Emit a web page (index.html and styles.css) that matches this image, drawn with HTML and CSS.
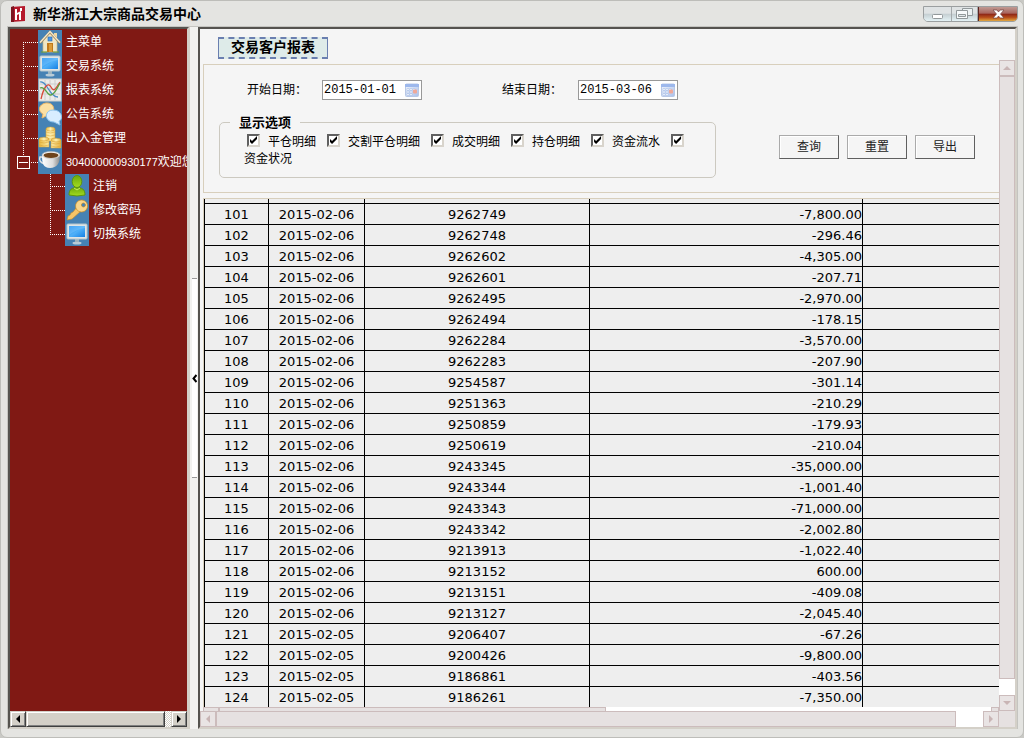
FILE: index.html
```
<!DOCTYPE html>
<html lang="zh-CN">
<head>
<meta charset="utf-8">
<title>新华浙江大宗商品交易中心</title>
<link rel="stylesheet" href="styles.css">
</head>
<body>
<svg class="defs" aria-hidden="true">
  <defs>
    <linearGradient id="screen" x1="0" y1="0" x2="1" y2="1"><stop offset="0" stop-color="#1c86e8"/><stop offset=".5" stop-color="#4fb0f8"/><stop offset="1" stop-color="#1580e4"/></linearGradient>
    <linearGradient id="gold" x1="0" x2="1"><stop offset="0" stop-color="#e8b840"/><stop offset=".5" stop-color="#fdf0b0"/><stop offset="1" stop-color="#e4b040"/></linearGradient>
    <linearGradient id="green" x1="0" y1="0" x2="0" y2="1"><stop offset="0" stop-color="#6aa80c"/><stop offset="1" stop-color="#a4dc20"/></linearGradient>
    <linearGradient id="cup" x1="0" x2="1"><stop offset="0" stop-color="#fff"/><stop offset=".6" stop-color="#dcdcdc"/><stop offset="1" stop-color="#888"/></linearGradient>
    <linearGradient id="sheetblue" x1="0" y1="0" x2="1" y2="1"><stop offset="0" stop-color="#f4f7fd"/><stop offset="1" stop-color="#a9c0ea"/></linearGradient>
    <symbol id="monitor" viewBox="0 0 24 24">
      <ellipse cx="12" cy="21" rx="4.500" ry="1.500" fill="#b8ccd8"/><path d="M10 17h4v3h-4z" fill="#9cb4c0"/>
      <rect x="2" y="2" width="20" height="15" rx="1" fill="#dfe5e6" stroke="#b4c4cc"/><rect x="4" y="4" width="16" height="11" fill="url(#screen)"/>
      <path d="M4 4h16v2C13 7 8 10 4 13z" fill="#7cc8ff" opacity=".45"/>
    </symbol>
    <symbol id="calendar" viewBox="0 0 16 14">
      <rect x="1.500" y="1" width="13" height="12.500" rx="1" fill="url(#sheetblue)" stroke="#b8c8e6"/><path d="M1 1h14v3H1z" fill="#9db8ec"/>
      <path d="M3 5.500h2v2H3zm3 0h2v2H6zm3 0h2v2H9zM3 8h2v2H3zm3 0h2v2H6zM3 10.500h2v2H3zm3 0h2v2H6z" fill="#fff" stroke="#a8bfe8" stroke-width=".6"/>
      <rect x="9" y="6.500" width="4" height="4" rx="1" fill="#f0a898"/>
    </symbol>
  </defs>
</svg>
<div class="window">
  <header class="titlebar">
    <svg class="logo" viewBox="0 0 14 16"><path d="M0 1L14 0v15L0 16z" fill="#b5192b"/><path d="M0 1l3-1v16H0z" fill="#7c1420"/><path d="M4 3h2v4l4-2v9H8V8L6 9v5H4zM9 2h2v3H9z" fill="#fff"/></svg>
    <h1 class="title">新华浙江大宗商品交易中心</h1>
    <div class="controls">
      <button class="control" aria-label="最小化"><svg width="27" height="14" viewBox="0 0 27 14"><rect x="8.500" y="7.500" width="10" height="4" rx="1" fill="#fff" stroke="#92999b"/></svg></button>
      <button class="control" aria-label="还原"><svg width="25" height="14" viewBox="0 0 25 14"><path d="M10.500 1.500h10v7h-10z" fill="#edf2f3" stroke="#92999b"/><path d="M4.500 3.500h11v8h-11z" fill="#f7fafb" stroke="#92999b"/><path d="M6.500 7.500h7v2h-7z" fill="#e2e8ea" stroke="#92999b"/></svg></button>
      <button class="control close" aria-label="关闭"><svg width="38" height="14" viewBox="0 0 38 14"><path d="M14 3h4l1.500 2L21 3h4l-3.500 4L25 11h-4l-1.500-2L18 11h-4l3.500-4z" fill="#fff" stroke="#724240" stroke-width=".7"/></svg></button>
    </div>
  </header>
  <main class="workspace">
    <nav class="sidebar">
      <div class="tree-area">
        <ul class="tree">
          <li><a class="node" href="#"><span class="branch first"></span><span class="icon"><svg viewBox="0 0 24 24"><path d="M5 10v12h14V10l-7-7z" fill="#f0e6c4" stroke="#c8b888" stroke-width=".7"/><path d="M16 3h3v6l-3-3z" fill="#f0d8a0"/><path d="M2 13L12 2l10 11" fill="none" stroke="#a08c60" stroke-width="2.500"/><path d="M2 12.500L12 1.500l10 11" fill="none" stroke="#f4ead0" stroke-width="1.200"/><path d="M9 13h6v9H9z" fill="#c07818"/><path d="M11 14h3v8h-3z" fill="#db9c38"/><rect x="10" y="7" width="4" height="4" fill="#4c9ae8" stroke="#2868b0" stroke-width=".6"/><path d="M3 22h6m6 0h6" stroke="#6ca030"/></svg></span><span>主菜单</span></a></li>
          <li><a class="node" href="#"><span class="branch"></span><span class="icon"><svg><use href="#monitor"/></svg></span><span>交易系统</span></a></li>
          <li><a class="node" href="#"><span class="branch"></span><span class="icon"><svg viewBox="0 0 24 24"><rect x="1" y="1" width="22" height="22" fill="#ececea" stroke="#d0d0cc"/><path d="M2 6h20M2 11h20M2 16h20M7 2v20M12 2v20M17 2v20" stroke="#ccc"/><path d="M2 4c7-2 9 15 18 15" fill="none" stroke="#4a8cc8" stroke-width="1.300"/><path d="M3 21C6 8 10 4 13 9s4 3 9-5" fill="none" stroke="#d84838" stroke-width="1.300"/><path d="M2 10c5-3 7 8 11 7s5-5 9-12" fill="none" stroke="#58a040" stroke-width="1.300"/></svg></span><span>报表系统</span></a></li>
          <li><a class="node" href="#"><span class="branch"></span><span class="icon"><svg viewBox="0 0 24 24"><path d="M8 1c10-1 10 12 2 12l-6 3 1-4C-1 9 1 2 8 1z" fill="#fbe0a4" stroke="#eeb868"/><path d="M15 8c10 0 10 10 6 11l1 4-6-3C6 20 6 8 15 8z" fill="#d8edff" stroke="#8ec4ee"/></svg></span><span>公告系统</span></a></li>
          <li><a class="node" href="#"><span class="branch"></span><span class="icon"><svg viewBox="0 0 24 24" fill="url(#gold)" stroke="#d8a030" stroke-width=".5"><path d="M8 3h9v12H8zM1 13h10v8H1zM13 14h10v8H13z"/><path d="M8 6q4 2 9 0M8 9q4 2 9 0M8 12q4 2 9 0M1 16q5 2 10 0M1 19q5 2 10 0M13 17q5 2 10 0M13 20q5 2 10 0" fill="none"/><ellipse cx="12.500" cy="3" rx="4.500" ry="2"/><ellipse cx="6" cy="13" rx="5" ry="1.800"/><ellipse cx="18" cy="14" rx="5" ry="1.800"/></svg></span><span>出入金管理</span></a></li>
          <li><a class="node" href="#"><span class="branch last"><span class="toggle"></span></span><span class="icon"><svg viewBox="0 0 24 24"><path d="M5 7H2q-2 5 5 7" fill="none" stroke="#e4e4e4" stroke-width="1.500"/><path d="M4 5c0 8 1 13 8 13s10-5 10-13z" fill="url(#cup)"/><ellipse cx="13" cy="5" rx="9" ry="3.500" fill="#f4f4f4" stroke="#bbb" stroke-width=".6"/><ellipse cx="13" cy="5.300" rx="7.500" ry="2.600" fill="#6e431b"/></svg></span><span class="nowrap"><span class="account">304000000930177</span>欢迎您</span></a>
            <ul class="subtree">
              <li><a class="node" href="#"><span class="branch sub"></span><span class="icon"><svg viewBox="0 0 24 24"><path d="M4 21c0-6 3-7 8-8 5 1 8 2 8 8q-8 2-16 0z" fill="url(#green)" stroke="#5c9410"/><ellipse cx="12" cy="7.500" rx="4.800" ry="6" fill="url(#green)" stroke="#5c9410"/><path d="M9 14l3 2 3-2" fill="none" stroke="#c8ee60"/></svg></span><span>注销</span></a></li>
              <li><a class="node" href="#"><span class="branch sub"></span><span class="icon"><svg viewBox="0 0 24 24"><path d="M12 9l4 4-9 8-5 1 1-4 2-1 1-2 2-1z" fill="#f5c468" stroke="#c88a20" stroke-width=".6"/><path d="M16.500 2a6 6 0 1 0 .1 0zm2 3a2 2 0 1 1-.1 0z" fill="#f8d68c" stroke="#c88a20" stroke-width=".7" fill-rule="evenodd"/></svg></span><span>修改密码</span></a></li>
              <li><a class="node" href="#"><span class="branch sub last"></span><span class="icon"><svg><use href="#monitor"/></svg></span><span>切换系统</span></a></li>
            </ul>
          </li>
        </ul>
      </div>
      <div class="side-scroll">
        <button class="side-arrow" aria-label="向左滚动"><i class="tri left"></i></button>
        <div class="side-thumb"></div>
        <div class="side-track"></div>
        <button class="side-arrow" aria-label="向右滚动"><i class="tri right"></i></button>
      </div>
    </nav>
    <div class="splitter"><button class="grip" aria-label="收起菜单"><svg width="5" height="9" viewBox="0 0 5 9"><path d="M4.500 1L1.500 4.500l3 3.500" fill="none" stroke="#000" stroke-width="2"/></svg></button></div>
    <section class="frame">
      <div class="heading-row"><h2 class="heading">交易客户报表</h2></div>
      <div class="report">
        <form class="filters" onsubmit="return false">
          <div class="criteria">
            <div class="dates">
              <label for="from">开始日期：</label>
              <span class="date"><input id="from" type="text" value="2015-01-01"><svg class="cal"><use href="#calendar"/></svg></span>
              <label class="second" for="to">结束日期：</label>
              <span class="date"><input id="to" type="text" value="2015-03-06"><svg class="cal"><use href="#calendar"/></svg></span>
            </div>
            <fieldset class="options">
              <legend>显示选项</legend>
              <div class="checks"><label><input type="checkbox" checked><span>平仓明细</span></label><label><input type="checkbox" checked><span>交割平仓明细</span></label><label><input type="checkbox" checked><span>成交明细</span></label><label><input type="checkbox" checked><span>持仓明细</span></label><label><input type="checkbox" checked><span>资金流水</span></label><label><input type="checkbox" checked> <span>资金状况</span></label></div>
            </fieldset>
          </div>
          <div class="actions">
            <button type="button">查询</button>
            <button type="reset">重置</button>
            <button type="button">导出</button>
          </div>
        </form>
        <div class="sheet">
          <table>
            <colgroup><col class="c-no"><col class="c-date"><col class="c-id"><col class="c-sum"><col></colgroup>
            <tbody>
              <tr class="cut"><td></td><td></td><td></td><td></td><td></td></tr>
              <tr><td>101</td><td>2015-02-06</td><td>9262749</td><td>-7,800.00</td><td></td></tr>
              <tr><td>102</td><td>2015-02-06</td><td>9262748</td><td>-296.46</td><td></td></tr>
              <tr><td>103</td><td>2015-02-06</td><td>9262602</td><td>-4,305.00</td><td></td></tr>
              <tr><td>104</td><td>2015-02-06</td><td>9262601</td><td>-207.71</td><td></td></tr>
              <tr><td>105</td><td>2015-02-06</td><td>9262495</td><td>-2,970.00</td><td></td></tr>
              <tr><td>106</td><td>2015-02-06</td><td>9262494</td><td>-178.15</td><td></td></tr>
              <tr><td>107</td><td>2015-02-06</td><td>9262284</td><td>-3,570.00</td><td></td></tr>
              <tr><td>108</td><td>2015-02-06</td><td>9262283</td><td>-207.90</td><td></td></tr>
              <tr><td>109</td><td>2015-02-06</td><td>9254587</td><td>-301.14</td><td></td></tr>
              <tr><td>110</td><td>2015-02-06</td><td>9251363</td><td>-210.29</td><td></td></tr>
              <tr><td>111</td><td>2015-02-06</td><td>9250859</td><td>-179.93</td><td></td></tr>
              <tr><td>112</td><td>2015-02-06</td><td>9250619</td><td>-210.04</td><td></td></tr>
              <tr><td>113</td><td>2015-02-06</td><td>9243345</td><td>-35,000.00</td><td></td></tr>
              <tr><td>114</td><td>2015-02-06</td><td>9243344</td><td>-1,001.40</td><td></td></tr>
              <tr><td>115</td><td>2015-02-06</td><td>9243343</td><td>-71,000.00</td><td></td></tr>
              <tr><td>116</td><td>2015-02-06</td><td>9243342</td><td>-2,002.80</td><td></td></tr>
              <tr><td>117</td><td>2015-02-06</td><td>9213913</td><td>-1,022.40</td><td></td></tr>
              <tr><td>118</td><td>2015-02-06</td><td>9213152</td><td>600.00</td><td></td></tr>
              <tr><td>119</td><td>2015-02-06</td><td>9213151</td><td>-409.08</td><td></td></tr>
              <tr><td>120</td><td>2015-02-06</td><td>9213127</td><td>-2,045.40</td><td></td></tr>
              <tr><td>121</td><td>2015-02-05</td><td>9206407</td><td>-67.26</td><td></td></tr>
              <tr><td>122</td><td>2015-02-05</td><td>9200426</td><td>-9,800.00</td><td></td></tr>
              <tr><td>123</td><td>2015-02-05</td><td>9186861</td><td>-403.56</td><td></td></tr>
              <tr><td>124</td><td>2015-02-05</td><td>9186261</td><td>-7,350.00</td><td></td></tr>
            </tbody>
          </table>
        </div>
        <div class="inner-scroll"><i class="inner-end"></i><i class="inner-thumb"></i><i class="inner-track"></i><i class="inner-end"></i></div>
      </div>
      <div class="vscroll">
        <button class="bar-button" aria-label="向上滚动"><i class="tri up"></i></button>
        <div class="bar-thumb"></div>
        <div class="bar-gap"></div>
        <button class="bar-button" aria-label="向下滚动"><i class="tri down"></i></button>
      </div>
      <div class="hscroll">
        <button class="bar-button" aria-label="向左滚动"><i class="tri left"></i></button>
        <div class="bar-thumb"></div>
        <div class="bar-gap"></div>
        <button class="bar-button" aria-label="向右滚动"><i class="tri right"></i></button>
      </div>
      <div class="corner"></div>
    </section>
  </main>
</div>
</body>
</html>
```
FILE: styles.css
```
* { box-sizing: border-box; }

body {
  margin: 0;
  background: #c9c9c5;
  color: #000;
  font: 12px/17px "Liberation Sans", "Noto Sans CJK SC", sans-serif;
}

button { padding: 0; margin: 0; font: inherit; }
ul { list-style: none; margin: 0; padding: 0; }
.defs { position: absolute; width: 0; height: 0; }

.window {
  display: flex;
  flex-direction: column;
  height: 100vh;
  padding: 0 5px 8px 6px;
  border: 1px solid #bdbdb9;
  border-radius: 7px;
  background: #e4e4e1;
}

/* Title bar */
.titlebar {
  display: flex;
  align-items: center;
  gap: 8px;
  flex: none;
  height: 25px;
  padding-left: 4px;
}
.logo { width: 14px; height: 16px; }
.title { flex: 1; margin: 0; font-size: 14px; line-height: 18px; font-weight: bold; }
.controls { display: flex; height: 16px; border: 1px solid #9b9fa0; border-radius: 0 0 5px 5px; overflow: hidden; }
.control {
  display: flex;
  border: 0;
  border-right: 1px solid #a4a9ab;
  background: linear-gradient(#dfe3e4 0 45%, #c4ced1 50%, #e4f2f5);
}
.control.close {
  border-right: 0;
  border-left: 1px solid #5c2420;
  background: linear-gradient(#c09a94 0, #a8645c 45%, #8c2416 50%, #b8501c 75%, #e0a840);
}

/* Work area */
.workspace {
  display: flex;
  flex: 1;
  min-height: 0;
  border: 1px solid #c4c4c0;
  border-bottom: 0;
  background: #f4f4f4;
}

.sidebar {
  display: flex;
  flex-direction: column;
  flex: none;
  width: 181px;
  border: 2px solid #d4d0c8;
  border-top-color: #55534f;
  border-left-color: #55534f;
  background: #801914;
}
.tree-area { flex: 1; min-height: 0; overflow: hidden; padding-top: 1px; }
.node {
  display: flex;
  align-items: center;
  height: 24px;
  color: #fff;
  text-decoration: none;
  white-space: nowrap;
}
.icon { flex: none; width: 24px; height: 24px; margin-right: 4px; background: #4682b4; }
.icon svg { display: block; width: 24px; height: 24px; }
.account { font-size: 11px; }
.branch {
  display: flex;
  align-items: center;
  flex: none;
  width: 28px;
  height: 24px;
  padding-left: 7px;
  background:
    repeating-linear-gradient(#fff 0 1px, transparent 1px 2px) 13px 0 / 1px 100% no-repeat,
    repeating-linear-gradient(90deg, #fff 0 1px, transparent 1px 2px) 13px 12px / 15px 1px no-repeat;
}
.branch.first { background-position: 13px 12px, 13px 12px; }
.branch.last { background-size: 1px 12px, 15px 1px; }
.subtree .branch { width: 55px; background-position: 40px 0, 40px 12px; }
.toggle {
  width: 13px;
  height: 13px;
  border: 1px solid #fff;
  background: linear-gradient(#fff, #fff) center / 9px 1px no-repeat #801914;
}

.side-scroll { display: flex; flex: none; height: 16px; background: #d4d0c8; }
.side-arrow, .side-thumb {
  border: 1px solid #404040;
  border-top-color: #d4d0c8;
  border-left-color: #d4d0c8;
  background: #d4d0c8;
  box-shadow: inset 1px 1px #fff, inset -1px -1px #808080;
}
.side-arrow { display: flex; align-items: center; justify-content: center; width: 16px; color: #000; }
.side-thumb { flex: 1; }
.side-track { width: 6px; background: repeating-conic-gradient(#fff 0 25%, #d4d0c8 0 50%) 0 0 / 2px 2px; }

.tri { width: 0; height: 0; border: 4px solid transparent; }
.tri.left { border-right-color: currentColor; border-left-width: 0; }
.tri.right { border-left-color: currentColor; border-right-width: 0; }
.tri.up { border-bottom-color: currentColor; border-top-width: 0; }
.tri.down { border-top-color: currentColor; border-bottom-width: 0; }

.splitter { display: flex; flex: none; align-items: center; width: 9px; padding: 0 1px 0 2px; background: #f2f2f0; border-left: 1px solid #d4d0c8; }
.grip {
  display: flex;
  align-items: center;
  width: 5px;
  height: 200px;
  border: 0;
  border-top: 1px solid #999;
  border-bottom: 1px solid #999;
  background: #fff;
}

/* Report frame */
.frame {
  display: grid;
  grid-template: 31px 1fr 16px / 1fr 16px;
  flex: 1;
  min-width: 0;
  border: 2px solid #d4d0c8;
  border-top-color: #55534f;
  border-left-color: #55534f;
  background: #f5f5f5;
}
.heading-row { grid-column: 1 / 3; padding: 8px 0 0 18px; }
.heading {
  width: 110px;
  height: 22px;
  margin: 0;
  border: 2px dashed #6a7fb0;
  border-left: 1px solid #6a7fb0;
  border-right: 1px solid #6a7fb0;
  background: #deebe9;
  font-size: 14px;
  line-height: 17px;
  text-align: center;
}
.report { display: flex; flex-direction: column; min-width: 0; min-height: 0; padding: 4px 0 0 3px; }
.filters {
  display: flex;
  flex: none;
  align-items: center;
  justify-content: space-between;
  height: 129px;
  margin-bottom: 5px;
  padding: 10px 24px 0 15px;
  border: 1px solid #d8cfbc;
  border-right: 0;
}
.criteria { width: 497px; }
.dates { display: flex; align-items: center; height: 20px; padding-left: 28px; }
.dates label { width: 75px; }
.dates .second { margin-left: 80px; width: 76px; }
.date { display: flex; align-items: center; width: 100px; height: 20px; border: 1px solid #999; background: #fff; }
.date input {
  flex: 1;
  min-width: 0;
  padding: 0 0 0 1px;
  border: 0;
  outline: 0;
  background: none;
  font: 12px/16px "Liberation Mono", monospace;
}
.cal { flex: none; width: 16px; height: 14px; margin-right: 1px; }
.options {
  height: 64px;
  min-width: 0;
  margin: 14px 0 9px;
  padding: 3px 0 0 16px;
  border: 1px solid #ccc9c0;
  border-radius: 5px;
}
.options legend { margin-left: -6px; padding: 0 9px; font-size: 13px; font-weight: bold; }
.checks { padding-left: 8px; text-indent: 3px; }
.checks span { white-space: nowrap; }
.checks label + label { margin-left: 11px; }
.checks input {
  appearance: none;
  width: 13px;
  height: 13px;
  margin: 0 8px 0 0;
  border: 2px solid;
  border-color: #606060 #d8d4cc #d8d4cc #606060;
  background: #fff;
  text-indent: 0;
  vertical-align: -1px;
}
.checks input:checked::before {
  content: "";
  display: block;
  width: 9px;
  height: 9px;
  background: #000;
  clip-path: polygon(1px 3px, 3px 5px, 8px 0, 8px 3px, 3px 8px, 1px 6px);
}
.actions { display: flex; align-self: flex-end; gap: 8px; padding-bottom: 33px; }
.actions button {
  width: 60px;
  height: 24px;
  border: 1px solid #5f5f5f;
  border-top-color: #aaa;
  border-left-color: #aaa;
  background: #f5f5f5;
  box-shadow: inset 1px 1px #fff;
  color: #222;
}

.sheet {
  flex: 1;
  min-height: 0;
  overflow: hidden;
  border-top: 1px solid #d8cfbc;
  border-left: 1px solid #d8cfbc;
}
table { width: 100%; table-layout: fixed; border-collapse: collapse; background: #eee; }
td {
  height: 21px;
  padding: 2px 0 0;
  border: 1px solid #000;
  font: 13px/18px "DejaVu Sans", sans-serif;
  text-align: center;
}
td:nth-child(4) { text-align: right; }
td:last-child { border-right: 0; }
.cut td { height: 4px; border-top: 0; }
.c-no { width: 64px; }
.c-date { width: 96px; }
.c-id { width: 225px; }
.c-sum { width: 273px; }

/* Frame scroll bars */
.inner-scroll { display: flex; flex: none; height: 4px; background: #fff; }
.inner-scroll i { border: 1px solid #ccbcbc; border-bottom: 0; background: #e6e1e1; }
.inner-end { width: 16px; }
.inner-end:last-child { width: 8px; }
.inner-thumb { flex: 1; }
.inner-scroll .inner-track { flex: 1; border: 0; background: #fff; }
.vscroll, .hscroll { display: flex; background: #fff; }
.vscroll { flex-direction: column; }
.bar-button {
  display: flex;
  flex: none;
  align-items: center;
  justify-content: center;
  width: 16px;
  height: 16px;
  border: 1px solid #ccbcbc;
  background: #e9e4e4;
  color: #c9b5b5;
}
.bar-thumb { flex: 1; border: 1px solid #ccbcbc; background: #e6e1e1; }
.vscroll .bar-gap { height: 16px; }
.hscroll .bar-gap { width: 27px; }
.corner { background: #e6e1e1; }
```
